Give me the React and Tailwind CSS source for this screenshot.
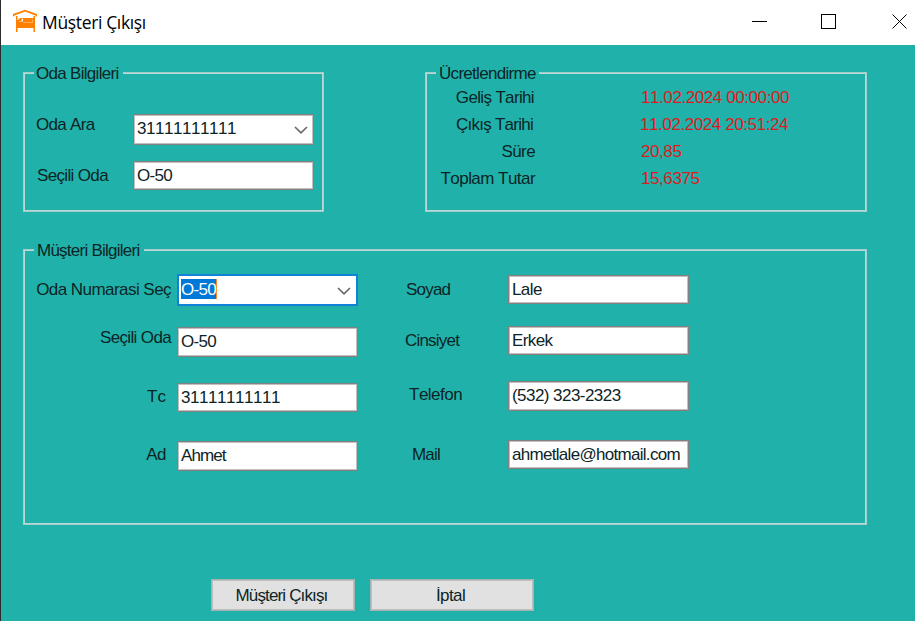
import React from "react";

function Chevron({ className }) {
  return (
    <svg className={"mr-[5px] h-2 w-[14px] shrink-0 " + className} viewBox="0 0 14 8" fill="none">
      <path d="M1 1 L7 6.8 L13 1" stroke="#6a6a6a" strokeWidth="1.7" />
    </svg>
  );
}

function Label({ className, children }) {
  return <span className={"block h-5 shrink-0 whitespace-nowrap leading-[22px] " + className}>{children}</span>;
}

function Field({ className = "h-[29px]", text = "tracking-[-0.45px]", children }) {
  return (
    <div className={"w-[181px] shrink-0 border border-[#858080] bg-white p-px pl-[3px] shadow-[inset_0_0_0_1px_#c4bfbd] " + className}>
      <span className={"mt-[2px] block h-5 whitespace-nowrap leading-[22px] " + text}>{children}</span>
    </div>
  );
}

function Group({ title, titleClass, className, children }) {
  return (
    <section className={"relative shrink-0 border border-[#a2cfcc] p-px shadow-[inset_0_0_0_1px_#bcd8d6] " + className}>
      <h2 className={"absolute -top-[9px] left-[10px] h-5 whitespace-nowrap bg-[#20b2aa] leading-5 " + titleClass}>
        {title}
      </h2>
      {children}
    </section>
  );
}

function TitleBar() {
  return (
    <header className="flex h-[45px] items-start bg-white">
      <svg className="mt-[9px] ml-3 h-6 w-6 shrink-0" viewBox="0 0 24 24" fill="none">
        <path d="M0.500 7.300 V5.800 L12 1.700 L23.500 5.800 V7.300" stroke="#ff8000" strokeWidth="1.9" />
        <path d="M3 7 H4.500 V9 H20.500 V7 H22 V23 H20.500 V19 H4.500 V23 H3 Z" fill="#ff8000" />
        <path d="M4.500 8 H8 L7 9.500 H5.500 V11 H4.500 Z M8.500 10.500 L10 9.500 V12.500 H6 V12 H8.500 Z" fill="#fff" />
        <path d="M10.500 13.500 H19.500 V10.500" stroke="#ffd0a0" strokeWidth="0.6" />
      </svg>
      <h1 className="mt-[10px] ml-[5px] h-6 whitespace-nowrap font-['Open_Sans',sans-serif] text-[17.5px] leading-6 tracking-[-0.35px] text-black">
        Müşteri Çıkışı
      </h1>
      <div className="mt-[13px] mr-[8px] ml-auto flex gap-[54px]">
        <svg className="h-4 w-[15px]" viewBox="0 0 15 16">
          <path d="M0 8.500 H15" stroke="#000" />
        </svg>
        <svg className="h-4 w-[15px]" viewBox="0 0 15 16" fill="none">
          <rect x="0.500" y="1.500" width="14" height="14" stroke="#000" />
        </svg>
        <svg className="ml-[2px] h-4 w-[15px]" viewBox="0 0 15 16">
          <path d="M0.500 1.500 L14.500 15.500 M14.500 1.500 L0.500 15.500" stroke="#000" />
        </svg>
      </div>
    </header>
  );
}

function RoomInfo() {
  return (
    <Group title="Oda Bilgileri" titleClass="pl-[2px] pr-1 tracking-[-0.7px]" className="h-[140px] w-[301px] pt-[41px] pl-[12px]">
      <div className="flex h-[47px]">
        <Label className="w-[97px] tracking-[-0.7px]">Oda Ara</Label>
        <Field className="h-[31px]" text="tracking-[-0.45px]">31111111111</Field>
        <div className="-ml-[20px]"><Chevron className="mt-[12px]" /></div>
      </div>
      <div className="flex">
        <Label className="mt-1 w-[97px] pl-px tracking-[-0.65px]">Seçili Oda</Label>
        <Field text="tracking-[-0.7px]">O-50</Field>
      </div>
    </Group>
  );
}

const charges = [
  ["Geliş Tarihi", "11.02.2024 00:00:00", "pr-[2px] tracking-[-0.65px]", "pl-px"],
  ["Çıkış Tarihi", "11.02.2024 20:51:24", "pr-[3px] tracking-[-0.75px]", ""],
  ["Süre", "20,85", "pr-px tracking-[-0.6px]", "pl-px"],
  ["Toplam Tutar", "15,6375", "pr-px tracking-[-0.55px]", "pl-px"],
];

function Charges() {
  return (
    <Group title="Ücretlendirme" titleClass="pl-[3px] pr-[3px] tracking-[-0.7px]" className="h-[140px] w-[442px] pt-[14px] pl-px">
      {charges.map(([name, value, nameClass, valueClass]) => (
        <div key={name} className="flex h-[27px]">
          <Label className={"w-[109px] text-right " + nameClass}>{name}</Label>
          <Label className={"ml-[104px] tracking-[-0.42px] text-[#dc1c1c] " + valueClass}>{value}</Label>
        </div>
      ))}
    </Group>
  );
}

function CustomerInfo() {
  return (
    <Group title="Müşteri Bilgileri" titleClass="pl-[3px] pr-1 tracking-[-0.75px]" className="flex h-[276px] w-[844px] pt-[25px] pl-px">
      <div className="w-[335px] shrink-0">
        <div className="flex h-[52px]">
          <Label className="mt-1 w-[152px] pr-[6px] text-right tracking-[-0.55px]">Oda Numarasi Seç</Label>
          <div className="-mt-px flex h-8 w-[181px] justify-between border-2 border-[#1281d8] bg-white pl-[2px]">
            <span className="mt-[3px] block h-5 border-r border-[#ff8728] bg-[#0078d7] leading-[21px] tracking-[-0.7px] text-white">O-50</span>
            <Chevron className="mt-[11px]" />
          </div>
        </div>
        <div className="flex h-14">
          <Label className="w-[152px] pr-[6px] text-right tracking-[-0.65px]">Seçili Oda</Label>
          <Field className="h-[30px]" text="tracking-[-0.7px]">O-50</Field>
        </div>
        <div className="flex h-[58px]">
          <Label className="mt-[3px] w-[152px] pr-[11px] text-right">Tc</Label>
          <Field text="tracking-[-0.45px]">31111111111</Field>
        </div>
        <div className="flex">
          <Label className="mt-[3px] w-[152px] pr-[11px] text-right tracking-[-0.5px]">Ad</Label>
          <Field className="h-[30px]" text="tracking-[-0.9px]">Ahmet</Field>
        </div>
      </div>
      <div className="ml-[44px]">
        <div className="flex h-[51px]">
          <Label className="mt-1 w-[104px] pl-[2px] tracking-[-0.8px]">Soyad</Label>
          <Field text="tracking-[-0.6px]">Lale</Field>
        </div>
        <div className="flex h-[55px]">
          <Label className="mt-1 w-[104px] pl-px tracking-[-0.8px]">Cinsiyet</Label>
          <Field text="tracking-[-0.6px]">Erkek</Field>
        </div>
        <div className="flex h-[59px]">
          <Label className="mt-[3px] w-[104px] pl-[5px] tracking-[-0.5px]">Telefon</Label>
          <Field className="h-[30px]" text="tracking-[-0.55px]">(532) 323-2323</Field>
        </div>
        <div className="flex">
          <Label className="mt-1 w-[104px] pl-[8px] tracking-[-0.8px]">Mail</Label>
          <Field text="tracking-[-0.7px]">ahmetlale@hotmail.com</Field>
        </div>
      </div>
    </Group>
  );
}

export default function App() {
  return (
    <div className="h-[621px] w-[915px] overflow-hidden border-l border-[#2b2b2b] bg-[#20b2aa] font-['Liberation_Sans',Arial,sans-serif] text-[17px] text-[#0c2426] [font-kerning:none]">
      <TitleBar />
      <main className="pt-[27px] pl-[22px]">
        <div className="flex gap-[101px]">
          <RoomInfo />
          <Charges />
        </div>
        <div className="mt-[37px]">
          <CustomerInfo />
        </div>
        <div className="mt-[54px] ml-[188px] flex gap-[15px]">
          <button className="h-8 w-[144px] border border-[#a4b3b2] bg-[#e1e1e1] pt-px pr-[3px] leading-[30px] tracking-[-0.85px] shadow-[inset_0_0_0_1px_#c0bfbf]">Müşteri Çıkışı</button>
          <button className="h-8 w-[164px] border border-[#a4b3b2] bg-[#e1e1e1] pt-px pr-[3px] leading-[30px] tracking-[-0.6px] shadow-[inset_0_0_0_1px_#c0bfbf]">İptal</button>
        </div>
      </main>
    </div>
  );
}
